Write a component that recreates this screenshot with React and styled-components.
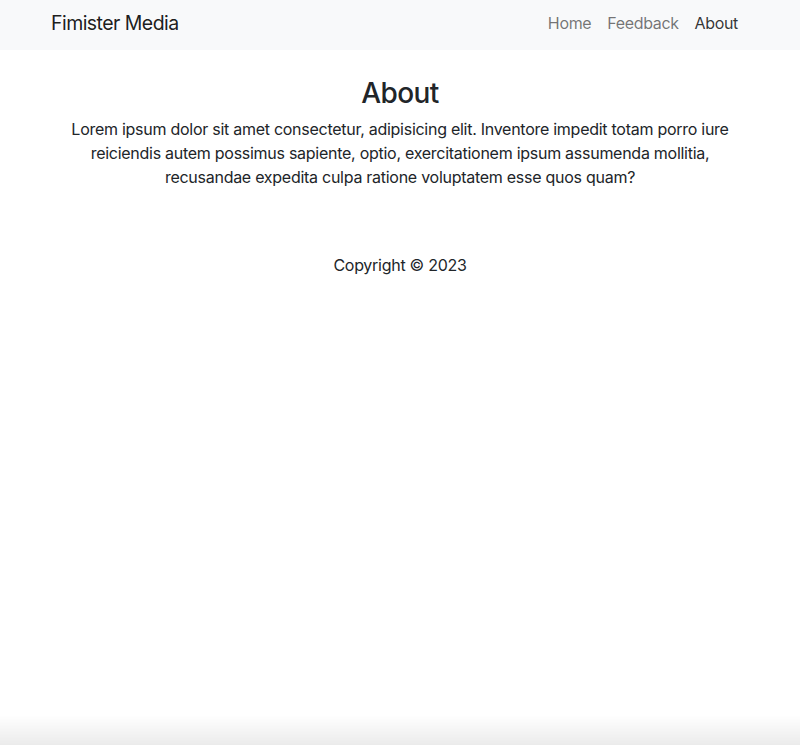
import React from "react";
import styled, { createGlobalStyle } from "styled-components";

const Global = createGlobalStyle`
  * { box-sizing: border-box; }
  html, body { margin: 0; padding: 0; background: #fff; }
  body {
    font-family: Inter, "Noto Sans", "Liberation Sans", sans-serif;
    font-size: 16px;
    line-height: 1.5;
    letter-spacing: -0.27px;
    color: #212529;
  }
`;

const NavBar = styled.nav`
  background: #f8f9fa;
  height: 50px;
  display: flex;
  align-items: center;
`;

const Container = styled.div`
  width: 720px;
  margin: 0 auto;
  padding: 0 12px;
`;

const NavInner = styled(Container)`
  display: flex;
  align-items: center;
  justify-content: space-between;
`;

const Brand = styled.a`
  font-size: 19.5px;
  letter-spacing: -0.55px;
  color: rgba(0, 0, 0, 0.9);
  text-decoration: none;
  line-height: 30px;
  margin-top: -4px;
  margin-left: -1px;
`;

const NavList = styled.ul`
  list-style: none;
  display: flex;
  margin: -4px 2px 0 0;
  padding: 0;
`;

const NavLink = styled.a`
  display: block;
  padding: 0 8px;
  font-size: 16px;
  line-height: 24px;
  letter-spacing: -0.35px;
  text-decoration: none;
  color: ${(p) => (p.$active ? "rgba(0,0,0,0.8)" : "rgba(0,0,0,0.55)")};
`;

const Main = styled(Container)`
  text-align: center;
  padding-top: 27px;
`;

const Title = styled.h2`
  font-size: 28px;
  font-weight: 500;
  line-height: 1.2;
  letter-spacing: -0.6px;
  margin: 0 0 6px;
  color: #212529;
`;

const Text = styled.p`
  margin: 0 0 16px;
  font-size: 16px;
  line-height: 24px;
`;

const Footer = styled.footer`
  text-align: center;
  padding-top: 48px;
  font-size: 16px;
  line-height: 24px;
`;

const BottomShade = styled.div`
  position: fixed;
  left: 0;
  right: 0;
  bottom: 0;
  height: 30px;
  pointer-events: none;
  background: linear-gradient(to bottom, rgba(0,0,0,0), rgba(0,0,0,0.08));
`;

export default function App() {
  return (
    <>
      <Global />
      <NavBar>
        <NavInner>
          <Brand href="#">Fimister Media</Brand>
          <NavList>
            <li><NavLink href="#">Home</NavLink></li>
            <li><NavLink href="#">Feedback</NavLink></li>
            <li><NavLink href="#" $active>About</NavLink></li>
          </NavList>
        </NavInner>
      </NavBar>
      <Main>
        <Title>About</Title>
        <Text>
          Lorem ipsum dolor sit amet consectetur, adipisicing elit. Inventore impedit totam porro iure
          reiciendis autem possimus sapiente, optio, exercitationem ipsum assumenda mollitia,
          recusandae expedita culpa ratione voluptatem esse quos quam?
        </Text>
      </Main>
      <Footer>Copyright © 2023</Footer>
      <BottomShade />
    </>
  );
}
